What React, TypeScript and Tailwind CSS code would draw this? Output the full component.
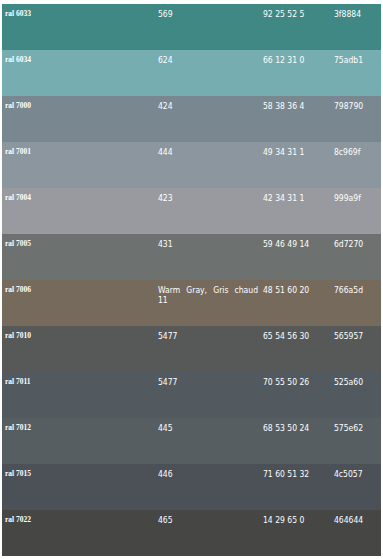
import React from 'react';

const colours = [
  { ral: 'ral 6033', code: '569', cmyk: '92 25 52 5', hex: '3f8884' },
  { ral: 'ral 6034', code: '624', cmyk: '66 12 31 0', hex: '75adb1' },
  { ral: 'ral 7000', code: '424', cmyk: '58 38 36 4', hex: '798790' },
  { ral: 'ral 7001', code: '444', cmyk: '49 34 31 1', hex: '8c969f' },
  { ral: 'ral 7004', code: '423', cmyk: '42 34 31 1', hex: '999a9f' },
  { ral: 'ral 7005', code: '431', cmyk: '59 46 49 14', hex: '6d7270' },
  { ral: 'ral 7006', code: 'Warm Gray, Gris chaud 11', cmyk: '48 51 60 20', hex: '766a5d' },
  { ral: 'ral 7010', code: '5477', cmyk: '65 54 56 30', hex: '565957' },
  { ral: 'ral 7011', code: '5477', cmyk: '70 55 50 26', hex: '525a60' },
  { ral: 'ral 7012', code: '445', cmyk: '68 53 50 24', hex: '575e62' },
  { ral: 'ral 7015', code: '446', cmyk: '71 60 51 32', hex: '4c5057' },
  { ral: 'ral 7022', code: '465', cmyk: '14 29 65 0', hex: '464644' },
];

export default function App() {
  return (
    <div className="w-[383px] h-[559px] bg-white pt-[4px] pl-[2px]">
      <div className="w-[379px] flex flex-col">
        {colours.map((c) => (
          <div
            key={c.ral}
            className="grid grid-cols-[153px_105px_71px_50px] h-[46px] text-white"
            style={{ backgroundColor: `#${c.hex}` }}
          >
            <div className="pl-[3px] pt-[5px] font-['Liberation_Serif',serif] font-semibold text-[7.5px] leading-[10px]">
              {c.ral}
            </div>
            <div className="pl-[3px] pr-[2px] pt-[5px] font-['DejaVu_Sans_Condensed','Open_Sans',sans-serif] text-[8.5px] leading-[10px] text-justify">
              {c.code}
            </div>
            <div className="pl-[3px] pt-[5px] font-['DejaVu_Sans_Condensed','Open_Sans',sans-serif] text-[8.5px] leading-[10px]">
              {c.cmyk}
            </div>
            <div className="pl-[3px] pt-[5px] font-['DejaVu_Sans_Condensed','Open_Sans',sans-serif] text-[8.5px] leading-[10px]">
              {c.hex}
            </div>
          </div>
        ))}
      </div>
    </div>
  );
}
